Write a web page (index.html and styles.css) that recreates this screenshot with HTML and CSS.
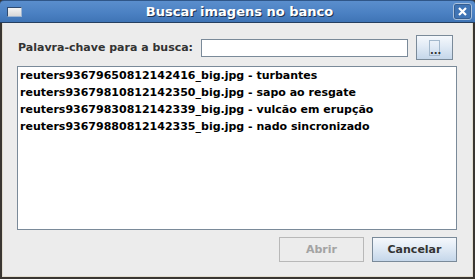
FILE: index.html
```html
<!DOCTYPE html>
<html lang="pt">

<head>
    <meta charset="UTF-8">
    <title>Buscar imagens no banco</title>
    <link rel="stylesheet" href="styles.css">
</head>

<body>
    <div class="window">
        <div class="titlebar">
            <span class="winIcon"></span>
            <span class="title">Buscar imagens no banco</span>
            <span class="closeBtn">
                <svg width="9" height="9" viewBox="0 0 9 9">
                    <path d="M1 1 L8 8 M8 1 L1 8" stroke="#fff" stroke-width="2.2" />
                </svg>
            </span>
        </div>

        <div class="content">
            <div class="searchRow">
                <label class="searchLabel" for="keyword">Palavra-chave para a busca:</label>
                <input type="text" id="keyword" class="field">
                <button class="btn dotsBtn"><span class="focusRing">...</span></button>
            </div>

            <ul class="fileList">
                <li>reuters93679650812142416_big.jpg - turbantes</li>
                <li>reuters93679810812142350_big.jpg - sapo ao resgate</li>
                <li>reuters93679830812142339_big.jpg - vulcão em erupção</li>
                <li>reuters93679880812142335_big.jpg - nado sincronizado</li>
            </ul>

            <div class="actions">
                <button class="btn disabled">Abrir</button>
                <button class="btn">Cancelar</button>
            </div>
        </div>
    </div>
</body>

</html>
```

FILE: styles.css
```css
html,
body {
    margin: 0;
    padding: 0;
    background-color: #ececec;
}

* {
    box-sizing: border-box;
}

.window {
    width: 475px;
    height: 279px;
    display: flex;
    flex-direction: column;
    background-color: #3a3632;
    font-family: "DejaVu Sans", sans-serif;
    font-weight: bold;
}

.titlebar {
    height: 23px;
    flex: none;
    display: flex;
    align-items: center;
    padding: 0 3px 0 7px;
    background: linear-gradient(#5a8ecd, #4a80c2 60%, #3f74b5);
    border-top: 1px solid #2f5688;
    border-bottom: 1px solid #253f60;
    border-radius: 4px 4px 0 0;
}

.winIcon {
    width: 15px;
    height: 10px;
    flex: none;
    background: linear-gradient(#f4f4f4, #d8d8d8);
    border: 1px solid #2e4a70;
    border-right-color: #9fb6d2;
    border-bottom-color: #9fb6d2;
}

.title {
    flex: 1;
    text-align: center;
    color: #fff;
    font-size: 13px;
    text-shadow: 1px 1px 0 #1f3350;
    margin-left: 4px;
}

.closeBtn {
    width: 19px;
    height: 17px;
    flex: none;
    display: flex;
    align-items: center;
    justify-content: center;
    border: 1px solid #a9c1dd;
    border-radius: 3px;
    background-color: #3f74b5;
    box-shadow: inset 0 0 0 1px #365f92;
}

.content {
    flex: 1;
    display: flex;
    flex-direction: column;
    margin: 0 2px 2px 2px;
    padding: 12px 15px 14px 14px;
    background-color: #ececec;
    border: 1px solid #e2ddd0;
    border-top: 0;
}

.searchRow {
    display: flex;
    align-items: center;
    height: 25px;
    margin-bottom: 6px;
    padding-right: 4px;
}

.searchLabel {
    width: 184px;
    padding-left: 1px;
    font-size: 11px;
    color: #333;
}

.field {
    width: 207px;
    height: 18px;
    margin-right: 8px;
    border: 1px solid #7a8a99;
    background: #fff;
    padding: 0 3px;
}

.btn {
    height: 25px;
    width: 85px;
    padding: 0;
    font-family: "DejaVu Sans", sans-serif;
    font-weight: bold;
    font-size: 11px;
    color: #333;
    border: 1px solid #7a8a99;
    background: linear-gradient(#f5f8fc, #e3ecf6 40%, #c5d7ea);
}

.dotsBtn {
    width: 37px;
    display: flex;
    align-items: center;
    justify-content: center;
}

.focusRing {
    display: block;
    width: 11px;
    height: 16px;
    line-height: 20px;
    font-size: 10px;
    border: 1px solid #a3b8cc;
    text-align: center;
}

.fileList {
    flex: 1;
    list-style: none;
    margin: 0;
    padding: 0 2px;
    background: #fff;
    border: 1px solid #7a8a99;
    font-size: 11px;
    color: #000;
}

.fileList li {
    height: 17px;
    line-height: 17px;
    white-space: nowrap;
}

.actions {
    display: flex;
    justify-content: flex-end;
    gap: 8px;
    margin-top: 7px;
}

.btn.disabled {
    color: #a3a3a3;
    border-color: #b8b8b8;
    background: #ececec;
}
```
